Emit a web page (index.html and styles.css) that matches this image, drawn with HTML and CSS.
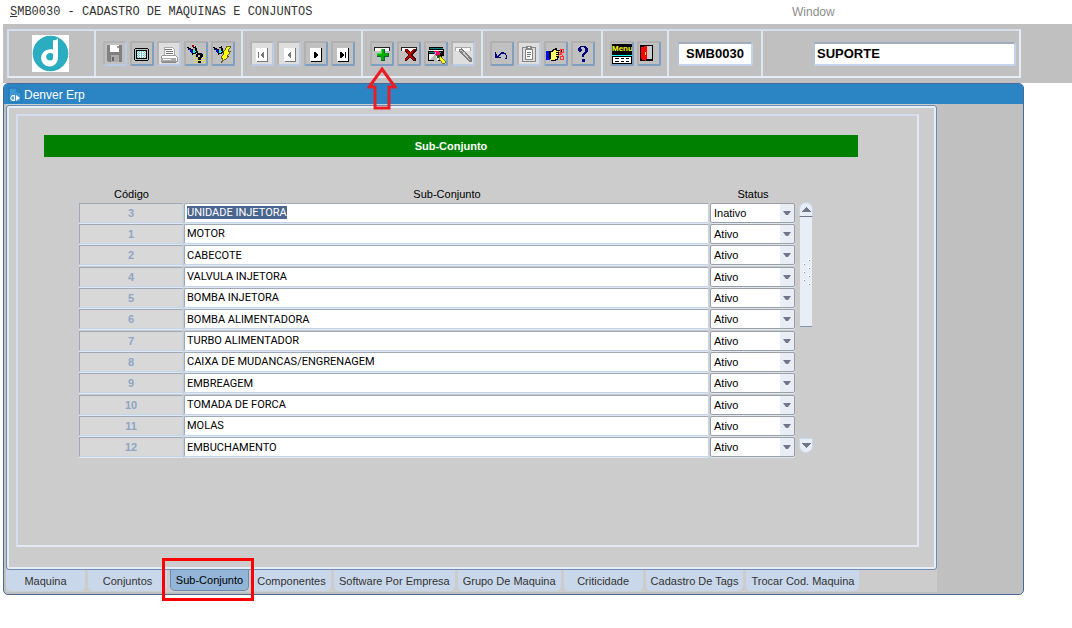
FILE: index.html
```html
<!DOCTYPE html>
<html lang="pt-BR">

<head>
    <meta charset="UTF-8">
    <meta name="viewport" content="width=device-width, initial-scale=1.0">
    <title>SMB0030 - CADASTRO DE MAQUINAS E CONJUNTOS</title>
    <link rel="stylesheet" href="styles.css">
</head>

<body>
    <header class="menubar">
        <span class="menu-title"><u>S</u>MB0030 - CADASTRO DE MAQUINAS E CONJUNTOS</span>
        <span class="menu-window">Window</span>
    </header>

    <!-- Toolbar -->
    <div class="toolbar-area">
        <div class="toolbar">
            <div class="group group-logo">
                <svg class="logo" viewBox="0 0 37 37">
                    <rect width="37" height="37" fill="#fff" />
                    <circle cx="18.500" cy="18.500" r="17.800" fill="#2badc1" />
                    <path d="M21 5Q24 6 26 3V24A8.500 8.500 0 1 1 17 14.500Q20 13.500 21 15Z" fill="#fff" />
                    <path d="M17.500 18Q20 17.500 21 19V24A3.800 3.800 0 1 1 17.500 18Z" fill="#2badc1" />
                </svg>
            </div>

            <div class="group">
                <button class="tool dim" aria-label="Salvar">
                    <svg viewBox="0 0 20 20"><path d="M2 1H17V18H3L2 17Z" fill="#808080" /><path d="M5 1H14V8H5Z" fill="#fff" /><path d="M12 2H14V4H12Z" fill="#999" /><path d="M6 11H14V18H6Z" fill="#aaa" /><path d="M7 13H9V17H7Z" fill="#666" /></svg>
                </button>
                <button class="tool" aria-label="Tela">
                    <svg viewBox="0 0 20 20"><path d="M3 4H16V5H17V16H16V17H3V16H2V5H3Z" /><path d="M3 5H16V16H3Z" fill="#c0c0c0" /><path d="M4 6H15V15H4Z" /><path d="M5 7H14V14H5Z" fill="#dff" /><path d="M5 7.5H14M5 9.5H14M5 11.5H14M5 13.5H14" stroke="#5cc" stroke-dasharray="1 1" /><path d="M6 8.5H14M6 10.5H14M6 12.5H14" stroke="#d99" stroke-dasharray="1 2" /></svg>
                </button>
                <button class="tool pale" aria-label="Imprimir">
                    <svg viewBox="0 0 20 20"><path d="M5 3H13L15 5V11H5Z" fill="#fff" stroke="#aaa" /><path d="M6 5.5H13M7 7.5H14M7 9.5H14" stroke="#777" /><path d="M4 11H16L18 13V17H2V13Z" fill="#fff" stroke="#999" /><path d="M2 14H17V17H2Z" fill="#aaa" /><path d="M4 15H12V16H4Z" fill="#fff" /><path d="M3 18H17V19H3Z" fill="#888" /></svg>
                </button>
                <button class="tool" aria-label="Consultar">
                    <svg viewBox="0 0 20 20"><path d="M8 10.500H19M8 12.500H19M8 14.500H19M8 16.500H19M8 18.500H19" stroke="#ee0" stroke-dasharray="1 1" /><path d="M1 3H3V4H5V5H7V3H9V2H10V4H11V7H12V9H10V10H7V11H6V9H5V8H4V6H2V4H1Z" /><path d="M3 5H5V6H6V8H7V9H5V7H4V6H3Z" fill="#00f" /><path d="M7 4H9V6H7Z" fill="#aaa" /><path d="M7 6H9V7H10V8H9V9H7Z" fill="#0ff" /><path d="M6 1H8V3H6Z" fill="#900" /><path d="M10 13V10H11V9H16V10H17V13H16V14H15V16H12V13H14V11H12V13ZM12 17H15V19H12Z" /></svg>
                </button>
                <button class="tool" aria-label="Executar consulta">
                    <svg viewBox="0 0 20 20"><path d="M0 3H2V4H4V5H6V3H8V2H9V4H10V7H11V9H9V10H6V11H5V9H4V8H3V6H1V4H0Z" /><path d="M2 5H4V6H5V8H6V9H4V7H3V6H2Z" fill="#00f" /><path d="M6 4H8V6H6Z" fill="#aaa" /><path d="M6 6H8V7H9V8H8V9H6Z" fill="#0ff" /><path d="M14 2H18L15 7H18L14 12H16L8 19L10 14H8L11 9H10Z" fill="#ff0" stroke="#333" stroke-width=".7" /></svg>
                </button>
            </div>

            <div class="group">
                <button class="tool pale" aria-label="Primeiro">
                    <svg viewBox="0 0 20 20"><path d="M4 4H16V18H5V17H4Z" fill="#777" /><path d="M4 4H15V17H4Z" fill="#fff" /><path d="M6 8H7V14H6ZM12 8V14H11V13H10V12H9V10H10V9H11V8Z" fill="#777" /></svg>
                </button>
                <button class="tool pale" aria-label="Anterior">
                    <svg viewBox="0 0 20 20"><path d="M5 4H17V18H6V17H5Z" fill="#777" /><path d="M5 4H16V17H5Z" fill="#fff" /><path d="M12 8V14H11V13H10V12H9V10H10V9H11V8Z" fill="#777" /></svg>
                </button>
                <button class="tool" aria-label="Próximo">
                    <svg viewBox="0 0 20 20"><path d="M4 4H16V18H5V17H4Z" /><path d="M4 4H15V17H4Z" fill="#fff" /><path d="M8 8H10V9H11V10H12V12H11V13H10V14H8Z" /></svg>
                </button>
                <button class="tool" aria-label="Último">
                    <svg viewBox="0 0 20 20"><path d="M4 4H16V18H5V17H4Z" /><path d="M4 4H15V17H4Z" fill="#fff" /><path d="M7 8H9V9H10V10H11V12H10V13H9V14H7ZM12 8H13V14H12Z" /></svg>
                </button>
            </div>

            <div class="group">
                <div class="marked">
                    <button class="tool" aria-label="Inserir registro">
                        <svg viewBox="0 0 20 20"><path d="M2 3H18V7H2Z" fill="#222" /><path d="M3 4H17V7H3Z" fill="#fff" /><path d="M9 5H13V9H17V13H13V17H9V13H5V9H9Z" fill="#063" /><path d="M9 5H12V9H16V12H12V16H9V12H5V9H9Z" fill="#0a0" /><path d="M9 5H10V10H5V9H9Z" fill="#3e3" /></svg>
                    </button>
                    <svg class="arrow" viewBox="0 0 30 44"><path d="M15 3L28 21H22V42H8V21H2Z" fill="none" stroke="#ed1c24" stroke-width="3" /></svg>
                </div>
                <button class="tool" aria-label="Excluir registro">
                    <svg viewBox="0 0 20 20"><path d="M2 3H18V7H2Z" fill="#222" /><path d="M3 4H17V7H3Z" fill="#fff" /><path d="M6 5H9L11 8L14 5H17V7L13 11L17 15V17H14L11 13L8 17H6V15L9 11L6 8Z" fill="#400" /><path d="M6 5H8L11 9L14 5H16L12 11L16 16H14L11 12L8 16H6L10 11Z" fill="#b00" /></svg>
                </button>
                <button class="tool" aria-label="Limpar registro">
                    <svg viewBox="0 0 20 20"><path d="M3 3H17V5H18V12H16V17H2V7H3Z" /><path d="M4 4H17V5H4ZM3 8H15V9H3Z" fill="#088" /><path d="M3 6H17V7H3ZM3 10H14V16H3Z" fill="#eee" /><path d="M3 16L9 10L12 17Z" fill="#bbb" /><path d="M8 7H12L14 9V12H10L8 10Z" fill="#f06" /><path d="M9 8H10V10H9Z" fill="#0ff" /><path d="M11 11H14V14H11Z" fill="#060" /><path d="M14 12L19 17V19H16L13 14Z" fill="#ff0" stroke="#333" stroke-width=".6" /></svg>
                </button>
                <button class="tool pale" aria-label="Limpar bloco">
                    <svg viewBox="0 0 20 20"><path d="M2 3H18V7H2Z" fill="#aaa" /><path d="M3 4H17V7H3Z" fill="#fff" /><path d="M6 5L9 4L19 15V18H16L6 8Z" fill="#808080" /><path d="M7 6H8L17 16M10 10L12 8" fill="none" stroke="#ccc" /></svg>
                </button>
            </div>

            <div class="group">
                <button class="tool" aria-label="Desfazer">
                    <svg viewBox="0 0 20 20"><path d="M3 8V14H9V13H7V12H8V11H9V10H13V11H14V14H13V15H15V11H14V9H12V8H9V9H8V10H7V11H6V12H5V10H4V8Z" fill="#000080" /></svg>
                </button>
                <button class="tool pale" aria-label="Colar">
                    <svg viewBox="0 0 20 20"><path d="M3.500 3.500H16.500V17.500H3.500Z" fill="#ddd" stroke="#888" /><path d="M6.500 5.500H13.500V15.500H6.500Z" fill="#fff" stroke="#888" /><path d="M7 2H13V6H7Z" fill="#888" /><path d="M9 3H11V4H9Z" fill="#fff" /><path d="M8 8.500H12M8 10.500H12M8 12.500H11" stroke="#777" /></svg>
                </button>
                <button class="tool" aria-label="Lista de valores">
                    <svg viewBox="0 0 20 20"><path d="M0 7H4V16H0Z" fill="#00f" /><path d="M3 7H5V15H3Z" /><path d="M5 7H6V6H7V5H9V4H11V6H16V9H13V14H12V16H10V17H5Z" /><path d="M5 8H7V7H8V6H10V7H15V8H10V9H12V10H10V11H12V12H10V13H11V15H9V16H5Z" fill="#ff6" /><path d="M12 7L17 12M12 12L17 8" stroke="#f33" /><circle cx="16" cy="7" r="2" fill="none" stroke="#f33" /><circle cx="16" cy="14" r="2" fill="none" stroke="#f33" /></svg>
                </button>
                <button class="tool" aria-label="Ajuda">
                    <svg viewBox="0 0 20 20"><path d="M5 7V4H6V3H7V2H13V3H14V4H15V8H14V9H13V10H12V11H11V13H9V10H10V9H11V8H12V4H11V3H8V5H9V7H8V8H6V7ZM9 15H12V18H9Z" fill="#000080" /></svg>
                </button>
            </div>

            <div class="group">
                <button class="tool tool-menu" aria-label="Menu">
                    <span class="menu-word">Menu</span>
                    <svg viewBox="0 0 20 10"><path d="M0 0H20V10H0Z" /><path d="M0 1H20V2H0Z" fill="#0ff" /><path d="M1 3H19V9H1Z" fill="#fff" /><path d="M3 4.500H7M9 4.500H12M14 4.500H17M3 7.500H7M9 7.500H12M14 7.500H17" stroke="#000" /></svg>
                </button>
                <button class="tool" aria-label="Sair">
                    <svg viewBox="0 0 20 20"><path d="M1 1H14V17H1Z" /><path d="M8 2H13V15H8Z" fill="#ccc" /><path d="M2 3L8 2V14L7 17L2 15Z" fill="#f00" /><path d="M6 8H7V11H6Z" fill="#ff0" /></svg>
                </button>
            </div>

            <div class="group group-code">
                <input class="bar-field code-field" type="text" value="SMB0030" aria-label="Programa" readonly>
            </div>
            <div class="group group-user">
                <input class="bar-field" type="text" value="SUPORTE" aria-label="Usuário" readonly>
            </div>
        </div>
    </div>

    <!-- Main window -->
    <main class="window">
        <div class="titlebar">
            <svg class="title-icon" viewBox="0 0 14 16"><path d="M1 1H9L13 5V15H1Z" fill="#3d97d3" stroke="#1c74b4" /><path d="M9 1V5H13" fill="none" stroke="#1c74b4" /><path d="M2 11L4 8H7V14H4Z" fill="#fff" /><path d="M3 11H6M5 9V13" stroke="#2b84c4" /><path d="M8 8L12 11L8 14Z" fill="#fff" /></svg>
            <span>Denver Erp</span>
        </div>

        <div class="workspace">
            <div class="panel">
                <div class="frame">
                    <h1 class="banner">Sub-Conjunto</h1>
                    <div class="records">
                        <table class="grid">
                            <thead>
                                <tr>
                                    <th class="col-code">Código</th>
                                    <th>Sub-Conjunto</th>
                                    <th class="col-status">Status</th>
                                </tr>
                            </thead>
                            <tbody id="rows"></tbody>
                        </table>
                        <div class="scroll">
                            <button class="scroll-btn up" aria-label="Rolar para cima"><svg viewBox="0 0 9 5"><path d="M4 0H5L9 5H0Z" fill="#70758c" /></svg></button>
                            <div class="thumb">
                                <svg viewBox="0 0 10 28"><path d="M7 1h2v2h-2zM2 5h2v2h-2zM7 9h2v2h-2zM2 13h2v2h-2zM7 17h2v2h-2zM2 21h2v2h-2zM7 25h2v2h-2z" fill="#fff" /><path d="M8 2h1v1h-1zM3 6h1v1h-1zM8 10h1v1h-1zM3 14h1v1h-1zM8 18h1v1h-1zM3 22h1v1h-1zM8 26h1v1h-1z" fill="#7b96b8" /></svg>
                            </div>
                            <button class="scroll-btn down" aria-label="Rolar para baixo"><svg viewBox="0 0 9 5"><path d="M0 0H9L5 5H4Z" fill="#70758c" /></svg></button>
                        </div>
                    </div>
                </div>
            </div>

            <nav class="tabs">
                <button class="tab">Maquina</button>
                <button class="tab">Conjuntos</button>
                <button class="tab active">Sub-Conjunto<span class="highlight"></span></button>
                <button class="tab">Componentes</button>
                <button class="tab">Software Por Empresa</button>
                <button class="tab">Grupo De Maquina</button>
                <button class="tab">Criticidade</button>
                <button class="tab">Cadastro De Tags</button>
                <button class="tab">Trocar Cod. Maquina</button>
            </nav>
        </div>
    </main>

    <script>
        const registros = [
            [3, 'UNIDADE INJETORA', 'Inativo'],
            [1, 'MOTOR', 'Ativo'],
            [2, 'CABECOTE', 'Ativo'],
            [4, 'VALVULA INJETORA', 'Ativo'],
            [5, 'BOMBA INJETORA', 'Ativo'],
            [6, 'BOMBA ALIMENTADORA', 'Ativo'],
            [7, 'TURBO ALIMENTADOR', 'Ativo'],
            [8, 'CAIXA DE MUDANCAS/ENGRENAGEM', 'Ativo'],
            [9, 'EMBREAGEM', 'Ativo'],
            [10, 'TOMADA DE FORCA', 'Ativo'],
            [11, 'MOLAS', 'Ativo'],
            [12, 'EMBUCHAMENTO', 'Ativo']
        ];

        document.getElementById('rows').innerHTML = registros.map(([codigo, nome, status]) => `
            <tr>
                <td><input class="cell code" type="text" value="${codigo}" aria-label="Código" disabled></td>
                <td><input class="cell name" type="text" value="${nome}" aria-label="Sub-Conjunto"></td>
                <td><select class="cell status" aria-label="Status">
                    <option ${status === 'Ativo' ? 'selected' : ''}>Ativo</option>
                    <option ${status === 'Inativo' ? 'selected' : ''}>Inativo</option>
                </select></td>
            </tr>`).join('');

        // current record starts selected
        const primeiro = document.querySelector('.name');
        primeiro.focus();
        primeiro.select();
    </script>
</body>

</html>
```
FILE: styles.css
```css
* {
    box-sizing: border-box;
}

body {
    min-height: 100vh;
    margin: 0;
    background-color: #fff;
    color: #000;
    font-family: "Liberation Sans", Arial, sans-serif;
    font-size: 11px;
}

button,
input,
select {
    font-family: inherit;
    font-size: inherit;
}

svg {
    display: block;
    shape-rendering: crispEdges;
}

.menubar {
    display: flex;
    align-items: center;
    height: 24px;
    padding-left: 10px;
}

.menu-title {
    flex: 0 0 782px;
    color: #333;
    font-family: "Liberation Mono", "Courier New", monospace;
    font-size: 12px;
}

.menu-window {
    color: #8c8c8c;
    font-size: 12px;
}

/* Toolbar */
.toolbar-area {
    margin-left: 3px;
    padding: 5px 51px 5px 4px;
    background-color: #c0c0c0;
}

.toolbar {
    display: flex;
    height: 49px;
    border: 2px solid;
    border-color: #d3dfef #e4ecf7 #e4ecf7 #d3dfef;
}

.group {
    display: flex;
    align-items: center;
    gap: 3px;
    padding: 0 6px 0 7px;
    border-right: 2px solid #dce6f3;
}

.group-logo {
    width: 87px;
    padding-left: 23px;
}

.group-code {
    width: 94px;
    padding: 0 8px;
}

.group-user {
    flex: 1;
    padding: 0 3px 0 50px;
    border-right: 0;
}

.logo {
    width: 37px;
    height: 37px;
    shape-rendering: auto;
}

.tool {
    width: 24px;
    height: 25px;
    padding: 0;
    border: 2px solid;
    border-color: #b0b0b0 #7e9ec2 #7e9ec2 #b0b0b0;
    border-radius: 2px;
    background-color: #c0c0c0;
}

.tool svg {
    width: 20px;
    height: 20px;
}

.tool.dim,
.tool.pale {
    border-color: #b4b4b4 #b9cce4 #b9cce4 #b4b4b4;
}

.tool.pale {
    background-color: #dedede;
}

.tool-menu .menu-word {
    display: block;
    width: 20px;
    height: 10px;
    overflow: hidden;
    background-color: #000;
    color: #ff0;
    font-size: 8px;
    font-weight: bold;
    line-height: 10px;
}

.tool-menu svg {
    height: 10px;
}

.marked {
    position: relative;
}

.marked .tool {
    display: block;
}

/* Callout over the insert button */
.arrow {
    position: absolute;
    top: 25px;
    left: -3px;
    z-index: 2;
    width: 30px;
    height: 44px;
    shape-rendering: auto;
}

.bar-field {
    width: 100%;
    height: 24px;
    padding: 0 2px;
    border: 2px solid;
    border-color: #a0adbd #c3d5ea #c3d5ea #b3c4d9;
    border-radius: 3px;
    background-color: #fff;
    font-size: 13px;
    font-weight: bold;
}

.code-field {
    text-align: center;
}

/* Window */
.window {
    margin: 0 48px 0 3px;
    padding-bottom: 2px;
    border: 1px solid #4a6a96;
    border-radius: 5px;
    background-color: #c0c0c0;
}

.titlebar {
    display: flex;
    align-items: center;
    gap: 2px;
    height: 20px;
    padding: 2px 4px 0;
    border-radius: 4px 4px 0 0;
    background-color: #2b84c4;
    color: #fff;
    font-size: 12px;
}

.title-icon {
    width: 14px;
    height: 16px;
    shape-rendering: auto;
}

.workspace {
    margin: 0 86px 0 2px;
    padding-top: 1px;
    background-color: #ccc;
}

.panel {
    padding: 8px 17px 22px 9px;
    border: 1px solid #6b8db5;
    border-radius: 3px;
    box-shadow: inset 0 0 0 2px #e6edf7;
}

.frame {
    padding: 19px 59px 87px 26px;
    border: 2px solid;
    border-color: #d3dfef #e0e9f5 #e0e9f5 #d3dfef;
}

.banner {
    margin: 0;
    background-color: #008000;
    color: #fff;
    font-size: 11px;
    line-height: 22px;
    text-align: center;
}

.records {
    display: flex;
    gap: 3px;
    margin: 30px 45px 0 35px;
}

.grid {
    flex: 1;
    border-collapse: collapse;
    table-layout: fixed;
}

.grid th {
    height: 15px;
    padding: 0;
    font-weight: normal;
    line-height: 15px;
}

.col-code {
    width: 105px;
}

.col-status {
    width: 86px;
}

.grid td {
    height: 21px;
    padding: 0 1px 0 0;
}

.grid tr:nth-child(3n) td {
    height: 22px;
}

.cell {
    display: block;
    width: 100%;
    height: 20px;
    border: 1px solid;
    border-color: #9fa9b6 #c3d5ea #c3d5ea #9fa9b6;
    border-radius: 2px;
    box-shadow: 0 1px 0 #dfe9f5;
    background-color: #fff;
    color: #000;
    outline: none;
}

.cell.code {
    border-radius: 0;
    background-color: #d8d8d8;
    color: #8ea6c4;
    font-weight: bold;
    text-align: center;
}

.cell.name {
    padding: 0 2px;
    font-family: Roboto, "Liberation Sans", Arial, sans-serif;
}

.cell.name::selection {
    background-color: #4a658f;
    color: #fff;
}

.cell.status {
    appearance: none;
    padding: 0 16px 0 3px;
    border-color: #9a9fa6;
    background: #fff url("data:image/svg+xml,%3Csvg xmlns='http://www.w3.org/2000/svg' width='14' height='18'%3E%3Cpath d='M0 0H14V18H0Z' fill='%23e8edf6'/%3E%3Cpath d='M3 7H11L8 11H6Z' fill='%2370758c'/%3E%3C/svg%3E") no-repeat right center;
}

/* Scrollbar */
.scroll {
    display: flex;
    flex-direction: column;
    width: 14px;
    padding: 15px 0 5px;
}

.scroll-btn {
    display: flex;
    align-items: center;
    justify-content: center;
    height: 15px;
    padding: 0;
    border: 1px solid #c9d7ea;
    background-color: #e8eef7;
}

.scroll-btn svg {
    width: 9px;
    height: 5px;
}

.scroll-btn.up {
    border-bottom-color: #70758c;
    border-radius: 7px 7px 0 0;
}

.scroll-btn.down {
    margin-top: auto;
    border-radius: 0 0 7px 7px;
}

.thumb {
    display: flex;
    align-items: center;
    justify-content: center;
    height: 110px;
    margin: 0 1px;
    border-bottom: 1px solid #8099ba;
    background-color: #e8edf6;
}

.thumb svg {
    width: 10px;
    height: 28px;
}

/* Tabs */
.tabs {
    display: flex;
    gap: 3px;
    height: 22px;
}

.tab {
    position: relative;
    min-width: 79px;
    height: 21px;
    padding: 0 5px;
    border: 0;
    border-radius: 0 0 5px 5px;
    background-color: #c9d7ea;
    color: #333;
    white-space: nowrap;
}

.tab.active {
    z-index: 1;
    padding: 0 4px;
    border: 1px solid #6b8db5;
    border-top: 0;
    background-color: #93b6d8;
    color: #000;
}

.highlight {
    position: absolute;
    inset: -12px -6px -11px -9px;
    border: 3px solid #f00;
}
```
